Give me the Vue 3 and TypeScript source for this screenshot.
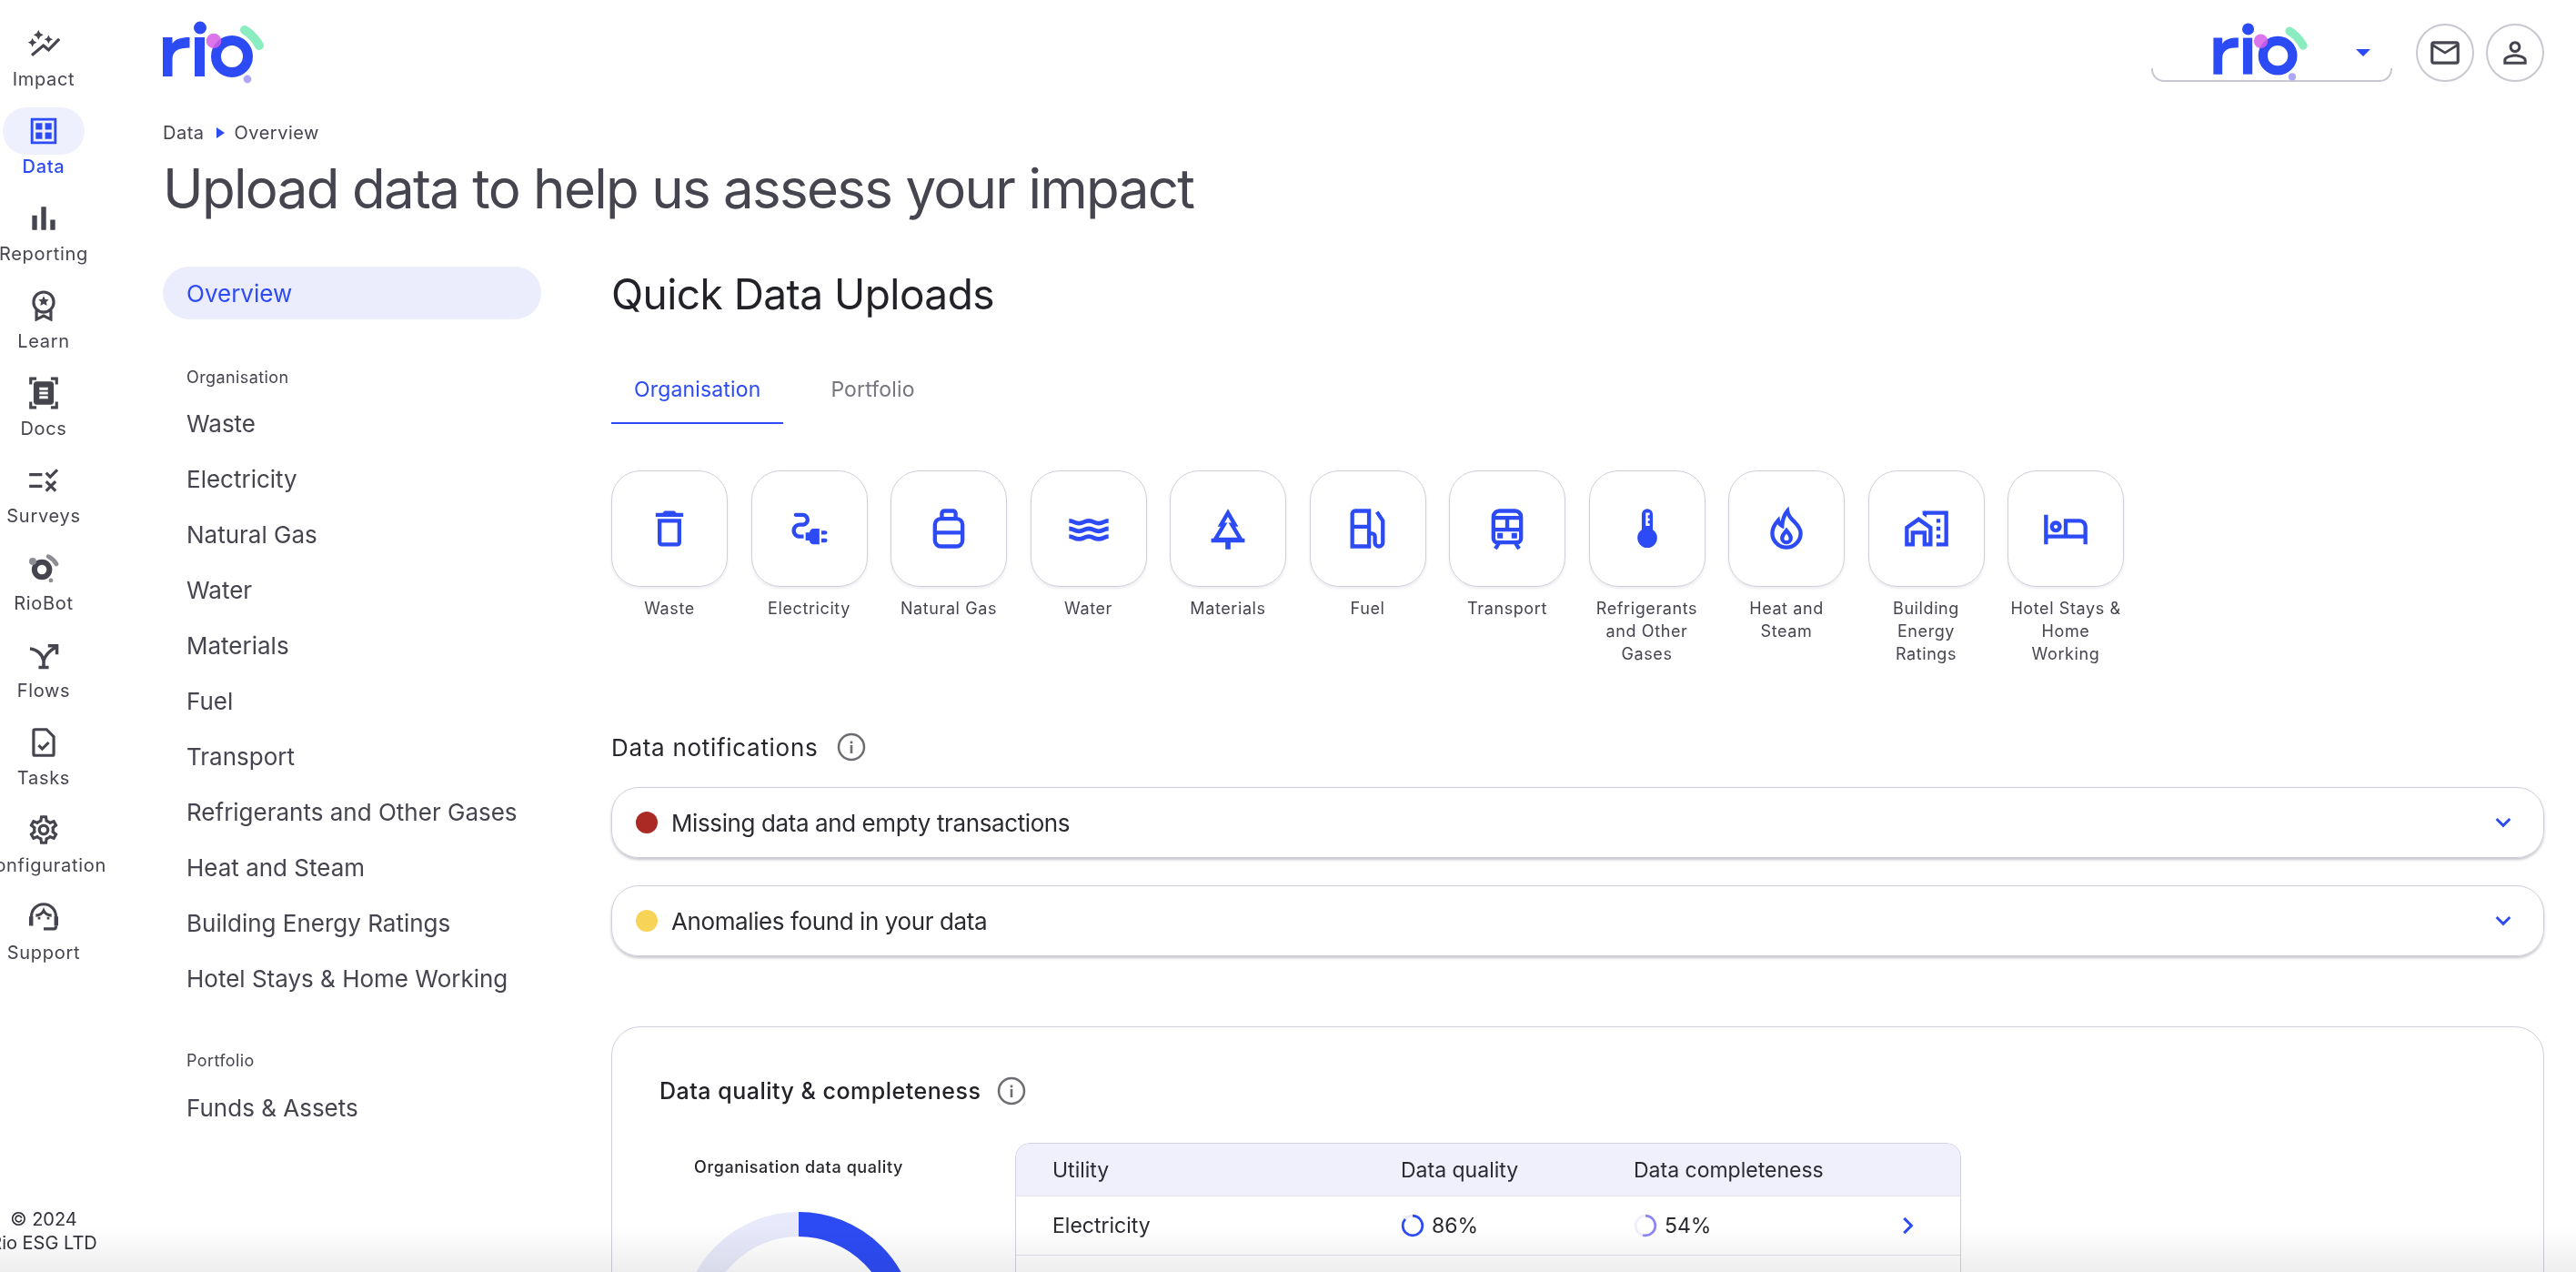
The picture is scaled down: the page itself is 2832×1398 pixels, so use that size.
<script setup lang="ts">
type Icon = { f?: string; s?: string; g?: string; sw?: number };

const star = (x: number, y: number, r = 3) => {
  const a = r * 0.34;
  const b = r * 0.66;
  return `M${x} ${y - r}l${a} ${b} ${b} ${a} ${-b} ${a} ${-a} ${b} ${-a} ${-b} ${-b} ${-a} ${b} ${-a}z`;
};

const railItems: { label: string; active?: boolean; icon: Icon }[] = [
  {
    label: "Impact",
    icon: {
      f: star(8.4, 5.9, 3.4) + star(4.2, 11.2, 3) + star(15.4, 9, 3),
      s: "M3.8 20l8-6.7 3.6 3 7.4-7.6",
      sw: 2,
    },
  },
  {
    label: "Data",
    active: true,
    icon: {
      f: "M3 3h18v18H3zM4.8 4.8v14.4h14.4V4.8zM6.5 6.5h4.5V11H6.5zM13 6.5h4.5V11H13zM6.5 13h4.5v4.5H6.5zM13 13h4.5v4.5H13z",
    },
  },
  {
    label: "Reporting",
    icon: { f: "M4 10h3.4v10H4zM10.3 4h3.4v16h-3.4zM16.6 13H20v7h-3.4z" },
  },
  {
    label: "Learn",
    icon: {
      f: "M12 5.2l1.1 2.3 2.5.3-1.8 1.7.5 2.5-2.3-1.2-2.3 1.2.5-2.5-1.8-1.7 2.5-.3z",
      s: "M12 2.5a7 7 0 1 1 0 14 7 7 0 0 1 0-14zM7 15v6.5l5-2.5 5 2.5V15",
      sw: 2,
    },
  },
  {
    label: "Docs",
    icon: {
      f: "M7 3H4v3H2V1h5zM22 6V1h-5v2h3v3zM7 21H4v-3H2v5h5zM20 18v3h-3v2h5v-5zM19 18c0 1.1-.9 2-2 2H7c-1.1 0-2-.9-2-2V6c0-1.1.9-2 2-2h10c1.1 0 2 .9 2 2zM15 8H9v2h6zM15 11H9v2h6zM15 14H9v2h6z",
    },
  },
  {
    label: "Surveys",
    icon: {
      f: "M16.54 11L13 7.46l1.41-1.41 2.12 2.12 4.24-4.24 1.41 1.41zM11 7H2v2h9zM21 13.41L19.59 12 17 14.59 14.41 12 13 13.41 15.59 16 13 18.59 14.41 20 17 17.41 19.59 20 21 18.59 18.41 16zM11 15H2v2h9z",
    },
  },
  {
    label: "RioBot",
    icon: {
      s: "M10.8 8.1a5.2 5.2 0 1 1 0 10.4 5.2 5.2 0 0 1 0-10.4z",
      sw: 3.8,
      g: "M15.2 4.2c2.4 1.2 4.4 3 5.7 5.3",
    },
  },
  {
    label: "Flows",
    icon: {
      s: "M2.5 7.5C7 8 11 11 12 16v4M8.5 20.5h7M12 16c1-4 4-7 8.5-9.5M15 5.5h6.2v6",
      sw: 2.2,
    },
  },
  {
    label: "Tasks",
    icon: {
      s: "M14 3H6a1 1 0 0 0-1 1v16a1 1 0 0 0 1 1h12a1 1 0 0 0 1-1V8zM8.5 14l2.5 2.5 4.5-4.5",
      sw: 2,
    },
  },
  {
    label: "Configuration",
    icon: {
      f: "M19.43 12.98c.04-.32.07-.64.07-.98 0-.34-.03-.66-.07-.98l2.11-1.65c.19-.15.24-.42.12-.64l-2-3.46c-.09-.16-.26-.25-.44-.25-.06 0-.12.01-.17.03l-2.49 1c-.52-.4-1.08-.73-1.69-.98l-.38-2.65C14.46 2.18 14.25 2 14 2h-4c-.25 0-.46.18-.49.42l-.38 2.65c-.61.25-1.17.59-1.69.98l-2.49-1c-.06-.02-.12-.03-.18-.03-.17 0-.34.09-.43.25l-2 3.46c-.13.22-.07.49.12.64l2.11 1.65c-.04.32-.07.65-.07.98 0 .33.03.66.07.98l-2.11 1.65c-.19.15-.24.42-.12.64l2 3.46c.09.16.26.25.44.25.06 0 .12-.01.17-.03l2.49-1c.52.4 1.08.73 1.69.98l.38 2.65c.03.24.24.42.49.42h4c.25 0 .46-.18.49-.42l.38-2.65c.61-.25 1.17-.59 1.69-.98l2.49 1c.06.02.12.03.18.03.17 0 .34-.09.43-.25l2-3.46c.12-.22.07-.49-.12-.64l-2.11-1.65zm-1.98-1.71c.04.31.05.52.05.73 0 .21-.02.43-.05.73l-.14 1.13.89.7 1.08.84-.7 1.21-1.27-.51-1.04-.42-.9.68c-.43.32-.84.56-1.25.73l-1.06.43-.16 1.13-.2 1.35h-1.4l-.19-1.35-.16-1.13-1.06-.43c-.43-.18-.83-.41-1.23-.71l-.91-.7-1.06.43-1.27.51-.7-1.21 1.08-.84.89-.7-.14-1.13c-.03-.31-.05-.54-.05-.74s.02-.43.05-.73l.14-1.13-.89-.7-1.08-.84.7-1.21 1.27.51 1.04.42.9-.68c.43-.32.84-.56 1.25-.73l1.06-.43.16-1.13.2-1.35h1.39l.19 1.35.16 1.13 1.06.43c.43.18.83.41 1.23.71l.91.7 1.06-.43 1.27-.51.7 1.21-1.07.85-.89.7.14 1.13zM12 8c-2.21 0-4 1.79-4 4s1.79 4 4 4 4-1.79 4-4-1.79-4-4-4zm0 6c-1.1 0-2-.9-2-2s.9-2 2-2 2 .9 2 2-.9 2-2 2z",
    },
  },
  {
    label: "Support",
    icon: {
      f: "M1.9 11.5h2.8V18H1.9zM19.3 11.5h2.8V18h-2.8zM8 11.8h1.7v1.7H8zM14.3 11.8H16v1.7h-1.7z",
      s: "M3.5 12v-.5a8.5 8.5 0 0 1 17 0v.5M6.5 10.8c3 0 4.5-1.3 5.5-3.3 1 2 2.5 3.3 5.5 3.3M20.5 18v.6a1.5 1.5 0 0 1-1.5 1.5h-7",
      sw: 2,
    },
  },
];

const tiles: { label: string; icon: Icon }[] = [
  {
    label: "Waste",
    icon: { f: "M6 19c0 1.1.9 2 2 2h8c1.1 0 2-.9 2-2V7H6zM8 9h8v10H8zM15.5 4l-1-1h-5l-1 1H5v2h14V4z" },
  },
  {
    label: "Electricity",
    icon: {
      f: "M21 14c0-.55-.45-1-1-1h-2v2h2c.55 0 1-.45 1-1zM20 17h-2v2h2c.55 0 1-.45 1-1s-.45-1-1-1zM12 14h-2v4h2c0 1.1.9 2 2 2h3v-8h-3c-1.1 0-2 .9-2 2zM5 13c0-1.1.9-2 2-2h1.5c1.93 0 3.5-1.57 3.5-3.5S10.43 4 8.5 4H5c-.55 0-1 .45-1 1s.45 1 1 1h3.5c.83 0 1.5.67 1.5 1.5S9.33 9 8.5 9H7c-2.21 0-4 1.79-4 4s1.79 4 4 4h2v-2H7c-1.1 0-2-.9-2-2z",
    },
  },
  {
    label: "Natural Gas",
    icon: {
      s: "M8.5 7V4.3A1.3 1.3 0 0 1 9.8 3h4.4a1.3 1.3 0 0 1 1.3 1.3V7M8 7h8a3 3 0 0 1 3 3v8a3 3 0 0 1-3 3H8a3 3 0 0 1-3-3v-8a3 3 0 0 1 3-3zM5 14h14",
      sw: 2,
    },
  },
  {
    label: "Water",
    icon: {
      s: "M2 8c2.5 0 2.5 1.3 5 1.3S9.5 8 12 8s2.5 1.3 5 1.3S19.5 8 22 8M2 12c2.5 0 2.5 1.3 5 1.3s2.5-1.3 5-1.3 2.5 1.3 5 1.3 2.5-1.3 5-1.3M2 16c2.5 0 2.5 1.3 5 1.3s2.5-1.3 5-1.3 2.5 1.3 5 1.3 2.5-1.3 5-1.3",
      sw: 2.2,
    },
  },
  {
    label: "Materials",
    icon: {
      f: "M10.7 18h2.6v4.5h-2.6z",
      s: "M12 4l3.5 6H14l4.5 7.5h-13L10 10H8.5zM3.5 18h17",
      sw: 2,
    },
  },
  {
    label: "Fuel",
    icon: {
      s: "M4 21V4.5A1.5 1.5 0 0 1 5.5 3h7v18zM4 11h8.5M12.5 14.5H14a1.5 1.5 0 0 1 1.5 1.5v3a2 2 0 0 0 4 0V8l-3-4.5",
      sw: 2,
    },
  },
  {
    label: "Transport",
    icon: {
      f: "M7 14.2h2.8V17H7zM14.2 14.2H17V17h-2.8z",
      s: "M5 6a3 3 0 0 1 3-3h8a3 3 0 0 1 3 3v11a2 2 0 0 1-2 2H7a2 2 0 0 1-2-2zM5 12.5h14M12 6.5v6M5 6.5h14M8 19l-2 3.2M16 19l2 3.2",
      sw: 2,
    },
  },
  {
    label: "Refrigerants and Other Gases",
    icon: {
      f: "M12 2a2.8 2.8 0 0 1 2.8 2.8v7.8a5 5 0 1 1-5.6 0V4.8A2.8 2.8 0 0 1 12 2zM11.2 3.9v6.7h2V9.4h-.9V8h.9V6.8h-.9V5.2h.9V3.9z",
    },
  },
  {
    label: "Heat and Steam",
    icon: {
      s: "M12.5 3c.5 3 2 4 3.5 5.5s3.2 3.5 3.2 5.8a7.2 7.2 0 0 1-14.4 0c0-2.8 1.6-5 3-6.5.3 1.5 1 2.3 2 2.8C10 7.5 10.8 5 12.5 3zM12 13c1 1.3 2.2 2.3 2.2 3.8a2.2 2.2 0 0 1-4.4 0c0-1.5 1.2-2.5 2.2-3.8z",
      sw: 2,
    },
  },
  {
    label: "Building Energy Ratings",
    icon: {
      f: "M1 11v10h5v-6h4v6h5V11L8 6zM13 19h-1v-6H4v6H3v-7l5-3.5 5 3.5zM17 7h2v2h-2zM17 11h2v2h-2zM17 15h2v2h-2zM10 3v1.97l2 1.43V5h9v14h-4v2h6V3z",
    },
  },
  {
    label: "Hotel Stays & Home Working",
    icon: {
      f: "M7 14c1.66 0 3-1.34 3-3S8.66 8 7 8s-3 1.34-3 3 1.34 3 3 3zM7 10c.55 0 1 .45 1 1s-.45 1-1 1-1-.45-1-1 .45-1 1-1zM19 7h-8v8H3V5H1v15h2v-3h18v3h2v-9c0-2.21-1.79-4-4-4zM21 15h-8V9h6c1.1 0 2 .9 2 2z",
    },
  },
];

const orgLinks = [
  "Waste",
  "Electricity",
  "Natural Gas",
  "Water",
  "Materials",
  "Fuel",
  "Transport",
  "Refrigerants and Other Gases",
  "Heat and Steam",
  "Building Energy Ratings",
  "Hotel Stays & Home Working",
];

const notifications = [
  { label: "Missing data and empty transactions", color: "#ab2a24" },
  { label: "Anomalies found in your data", color: "#f7d358" },
];

const ringLength = 2 * Math.PI * 10;
const ringDash = (pct: number) => `${(ringLength * pct) / 100} ${ringLength}`;

const donutLength = 2 * Math.PI * 115.5;
const donutDash = `${donutLength * 0.72} ${donutLength}`;
</script>

<template>
  <div class="page">
    <svg class="defs" width="0" height="0">
      <symbol id="rio-logo" viewBox="0 0 112 72">
        <path
          fill="#2d4bf5"
          d="M0 20h10.5v7c3-5 9-7 19-7v11.5c-12 0-19 3-19 13V63H0z"
        />
        <rect x="35" y="20" width="11" height="43" fill="#2d4bf5" />
        <circle cx="41" cy="9.6" r="7" fill="#2d4bf5" />
        <circle cx="76" cy="41" r="17.5" fill="none" stroke="#2d4bf5" stroke-width="11" />
        <circle cx="56" cy="24" r="8.3" fill="#d65ee6" opacity="0.85" />
        <path
          d="M90 12c7 4 12 10 16 17"
          fill="none"
          stroke="#8aedc0"
          stroke-width="10"
          stroke-linecap="round"
        />
        <circle cx="93" cy="66" r="4.4" fill="#aea6f7" />
      </symbol>
    </svg>

    <nav class="rail">
      <a
        v-for="item in railItems"
        :key="item.label"
        class="rail-item"
        :class="{ active: item.active }"
      >
        <span class="rail-icon">
          <svg viewBox="0 0 24 24" width="38" height="38">
            <path v-if="item.icon.f" :d="item.icon.f" fill="currentColor" fill-rule="evenodd" />
            <path
              v-if="item.icon.s"
              :d="item.icon.s"
              fill="none"
              stroke="currentColor"
              :stroke-width="item.icon.sw || 2"
            />
            <g v-if="item.icon.g" fill="#8d8d93">
              <path :d="item.icon.g" fill="none" stroke="#8d8d93" stroke-width="3" stroke-linecap="round" />
              <circle cx="4.4" cy="7.6" r="2.5" />
              <circle cx="17" cy="20.8" r="1.5" />
            </g>
          </svg>
        </span>
        <span class="rail-label">{{ item.label }}</span>
      </a>
      <div class="rail-footer">
        <div>© 2024</div>
        <div>Rio ESG LTD</div>
      </div>
    </nav>

    <div class="main">
      <header class="topbar">
        <svg class="logo" width="112" height="72"><use href="#rio-logo" /></svg>
        <div class="top-actions">
          <div class="org-select">
            <svg class="org-logo" width="105" height="67"><use href="#rio-logo" /></svg>
            <span class="caret"></span>
          </div>
          <button class="round-btn">
            <svg viewBox="0 0 24 24" width="38" height="38">
              <path
                fill="currentColor"
                fill-rule="evenodd"
                d="M20 4H4c-1.1 0-1.99.9-1.99 2L2 18c0 1.1.9 2 2 2h16c1.1 0 2-.9 2-2V6c0-1.1-.9-2-2-2zM20 18H4V8l8 5 8-5zM12 11L4 6h16z"
              />
            </svg>
          </button>
          <button class="round-btn">
            <svg viewBox="0 0 24 24" width="38" height="38">
              <path
                fill="currentColor"
                fill-rule="evenodd"
                d="M12 5.9c1.16 0 2.1.94 2.1 2.1s-.94 2.1-2.1 2.1S9.9 9.16 9.9 8s.94-2.1 2.1-2.1M12 14.9c2.97 0 6.1 1.46 6.1 2.1v1.1H5.9V17c0-.64 3.13-2.1 6.1-2.1M12 4C9.79 4 8 5.79 8 8s1.79 4 4 4 4-1.79 4-4-1.79-4-4-4zM12 13c-2.67 0-8 1.34-8 4v3h16v-3c0-2.66-5.33-4-8-4z"
              />
            </svg>
          </button>
        </div>
      </header>

      <div class="crumbs">
        <span>Data</span>
        <span class="crumb-arrow"></span>
        <span>Overview</span>
      </div>
      <h1 class="title">Upload data to help us assess your impact</h1>

      <div class="columns">
        <aside class="side">
          <a class="side-pill">Overview</a>
          <div class="side-group">Organisation</div>
          <a v-for="link in orgLinks" :key="link" class="side-link">{{ link }}</a>
          <div class="side-group second">Portfolio</div>
          <a class="side-link">Funds &amp; Assets</a>
        </aside>

        <section class="content">
          <h2 class="section-title">Quick Data Uploads</h2>

          <div class="tabs">
            <a class="tab active">Organisation</a>
            <a class="tab">Portfolio</a>
          </div>

          <div class="tiles">
            <div v-for="tile in tiles" :key="tile.label" class="tile">
              <div class="tile-box">
                <svg viewBox="0 0 24 24" width="52" height="52">
                  <path v-if="tile.icon.f" :d="tile.icon.f" fill="currentColor" fill-rule="evenodd" />
                  <path
                    v-if="tile.icon.s"
                    :d="tile.icon.s"
                    fill="none"
                    stroke="currentColor"
                    :stroke-width="tile.icon.sw || 2"
                  />
                </svg>
              </div>
              <div class="tile-label">{{ tile.label }}</div>
            </div>
          </div>

          <div class="subhead">
            <span>Data notifications</span>
            <svg class="info" viewBox="0 0 32 32" width="32" height="32">
              <circle cx="16" cy="16" r="14" fill="none" stroke="currentColor" stroke-width="2.5" />
              <rect x="14.7" y="14" width="2.6" height="9" fill="currentColor" />
              <rect x="14.7" y="9.5" width="2.6" height="2.8" fill="currentColor" />
            </svg>
          </div>

          <div class="notices">
            <div v-for="n in notifications" :key="n.label" class="notice">
              <span class="dot" :style="{ background: n.color }"></span>
              <span class="notice-text">{{ n.label }}</span>
              <svg class="chev" viewBox="0 0 24 24" width="32" height="32">
                <path d="M6.5 9l5.5 5.5L17.5 9" fill="none" stroke="currentColor" stroke-width="2.2" />
              </svg>
            </div>
          </div>

          <div class="card">
            <div class="card-head">
              <span>Data quality &amp; completeness</span>
              <svg class="info" viewBox="0 0 32 32" width="32" height="32">
                <circle cx="16" cy="16" r="14" fill="none" stroke="currentColor" stroke-width="2.5" />
                <rect x="14.7" y="14" width="2.6" height="9" fill="currentColor" />
                <rect x="14.7" y="9.5" width="2.6" height="2.8" fill="currentColor" />
              </svg>
            </div>
            <div class="card-body">
              <div class="chart">
                <div class="chart-title">Organisation data quality</div>
                <svg class="donut" viewBox="0 0 258 258" width="258" height="258">
                  <circle cx="129" cy="129" r="115.5" fill="none" stroke="#e8eafb" stroke-width="27" />
                  <circle
                    cx="129"
                    cy="129"
                    r="115.5"
                    fill="none"
                    stroke="#2d4bf5"
                    stroke-width="27"
                    :stroke-dasharray="donutDash"
                    transform="rotate(-90 129 129)"
                  />
                </svg>
              </div>
              <div class="table">
                <div class="row head">
                  <span>Utility</span>
                  <span>Data quality</span>
                  <span>Data completeness</span>
                  <span></span>
                </div>
                <div class="row">
                  <span>Electricity</span>
                  <span class="metric">
                    <svg viewBox="0 0 24 24" width="26" height="26">
                      <circle cx="12" cy="12" r="10" fill="none" stroke="#e8eafb" stroke-width="2.5" />
                      <circle
                        cx="12"
                        cy="12"
                        r="10"
                        fill="none"
                        stroke="#2d4bf5"
                        stroke-width="2.5"
                        :stroke-dasharray="ringDash(86)"
                        transform="rotate(-90 12 12)"
                      />
                    </svg>
                    86%
                  </span>
                  <span class="metric">
                    <svg viewBox="0 0 24 24" width="26" height="26">
                      <circle cx="12" cy="12" r="10" fill="none" stroke="#eeeefc" stroke-width="2.5" />
                      <circle
                        cx="12"
                        cy="12"
                        r="10"
                        fill="none"
                        stroke="#8d86f5"
                        stroke-width="2.5"
                        :stroke-dasharray="ringDash(54)"
                        transform="rotate(-90 12 12)"
                      />
                    </svg>
                    54%
                  </span>
                  <svg class="row-chev" viewBox="0 0 24 24" width="30" height="30">
                    <path d="M9 5.5l6.5 6.5L9 18.5" fill="none" stroke="currentColor" stroke-width="2.4" />
                  </svg>
                </div>
                <div class="row"></div>
              </div>
            </div>
          </div>
        </section>
      </div>
    </div>

    <div class="bottom-fade"></div>
  </div>
</template>

<style>
html,
body {
  margin: 0;
  background: #fff;
}
</style>

<style scoped>
.page {
  position: relative;
  display: flex;
  width: 2832px;
  height: 1398px;
  overflow: hidden;
  background: #fff;
  color: #45454f;
  font-family: Inter, "Noto Sans", sans-serif;
}

.defs {
  position: absolute;
}

.rail {
  display: flex;
  flex-direction: column;
  flex: 0 0 96px;
  width: 96px;
  height: 1373px;
  padding-top: 22px;
  box-sizing: border-box;
}

.rail-item {
  display: flex;
  flex-direction: column;
  align-items: center;
  height: 96px;
  flex: 0 0 96px;
  white-space: nowrap;
}

.rail-icon {
  display: flex;
  align-items: center;
  justify-content: center;
  width: 90px;
  height: 52px;
  flex: 0 0 52px;
  border-radius: 26px;
}

.rail-label {
  font-size: 20px;
  line-height: 24px;
  margin-top: 1px;
  letter-spacing: 0.7px;
}

.rail-item.active {
  color: #2d4bf5;
}

.rail-item.active .rail-icon {
  background: #eff0fd;
}

.rail-item.active .rail-label {
  font-weight: 500;
}

.rail-footer {
  margin-top: auto;
  height: 47px;
  flex: 0 0 47px;
  padding-top: 1px;
  box-sizing: border-box;
  clip-path: inset(0 -40px 0 -40px);
  display: flex;
  flex-direction: column;
  align-items: center;
  white-space: nowrap;
  font-size: 20px;
  line-height: 26px;
  color: #33333b;
}

.main {
  flex: 1;
  min-width: 0;
  padding: 0 35px 0 83px;
}

.topbar {
  display: flex;
  justify-content: space-between;
  align-items: flex-start;
  height: 93px;
  padding-top: 21px;
  box-sizing: border-box;
}

.logo {
  display: block;
}

.top-actions {
  display: flex;
  align-items: flex-start;
  gap: 13px;
  padding-top: 5px;
}

.org-select {
  position: relative;
  width: 265px;
  height: 64px;
  margin-right: 13px;
  box-sizing: border-box;
}

.org-select::after {
  content: "";
  position: absolute;
  left: 0;
  right: 0;
  bottom: 0;
  height: 15px;
  border: 2px solid #c8c8d4;
  border-top: none;
  border-radius: 0 0 14px 14px;
  box-sizing: border-box;
}

.org-logo {
  position: absolute;
  left: 68px;
  top: -3px;
  z-index: 1;
}

.caret {
  position: absolute;
  left: 225px;
  top: 28px;
  width: 0;
  height: 0;
  border-left: 8px solid transparent;
  border-right: 8px solid transparent;
  border-top: 8px solid #2d4bf5;
}

.round-btn {
  display: flex;
  align-items: center;
  justify-content: center;
  width: 64px;
  height: 64px;
  padding: 0;
  border: 2.5px solid #c8c8d0;
  border-radius: 50%;
  background: #fff;
  color: #45454f;
}

.crumbs {
  display: flex;
  align-items: center;
  margin-top: 41px;
  height: 24px;
  font-size: 20px;
  letter-spacing: 0.5px;
}

.crumb-arrow {
  width: 0;
  height: 0;
  margin: 0 11px 0 13px;
  border-top: 6px solid transparent;
  border-bottom: 6px solid transparent;
  border-left: 9px solid #2d4bf5;
}

.title {
  margin: 9px 0 0;
  height: 80px;
  font-size: 60px;
  line-height: 80px;
  font-weight: 400;
  letter-spacing: -1.7px;
  white-space: nowrap;
}

.columns {
  display: flex;
  margin-top: 46px;
  gap: 77px;
}

.side {
  flex: 0 0 416px;
  display: flex;
  flex-direction: column;
}

.side-pill {
  height: 58px;
  line-height: 59px;
  padding-left: 26px;
  border-radius: 29px;
  background: #ebedfc;
  color: #2d4bf5;
  font-size: 26px;
}

.side-group {
  margin-top: 52px;
  margin-bottom: 7.5px;
  padding-left: 26px;
  height: 24px;
  line-height: 24px;
  font-size: 18px;
  letter-spacing: 0.4px;
}

.side-group.second {
  margin-top: 48px;
  margin-bottom: 9px;
}

.side-link {
  height: 61px;
  line-height: 61px;
  padding-left: 26px;
  font-size: 26px;
  white-space: nowrap;
}

.content {
  flex: 1;
  min-width: 0;
}

.section-title {
  margin: 0;
  height: 60px;
  line-height: 60px;
  font-size: 46px;
  font-weight: 400;
  letter-spacing: -0.55px;
  color: #222228;
}

.tabs {
  display: flex;
  gap: 27px;
  margin-top: 39px;
  height: 74px;
}

.tab {
  height: 74px;
  line-height: 72px;
  padding: 0 25px;
  box-sizing: border-box;
  font-size: 23px;
  letter-spacing: 0.15px;
  color: #77777f;
}

.tab.active {
  color: #2d4bf5;
  border-bottom: 2px solid #2d4bf5;
}

.tiles {
  display: flex;
  gap: 25.5px;
  margin-top: 51px;
  height: 214px;
}

.tile {
  width: 128px;
}

.tile-box {
  display: flex;
  align-items: center;
  justify-content: center;
  width: 128px;
  height: 128px;
  box-sizing: border-box;
  border: 1px solid #cfcfdc;
  border-radius: 32px;
  box-shadow: 0 2px 3px rgba(60, 60, 90, 0.1);
  color: #2d4bf5;
}

.tile-label {
  margin-top: 11px;
  font-size: 18px;
  line-height: 25px;
  letter-spacing: 0.6px;
  text-align: center;
}

.subhead {
  display: flex;
  align-items: center;
  gap: 21px;
  margin-top: 74px;
  height: 32px;
  font-size: 26px;
  letter-spacing: 0.7px;
  color: #26262c;
}

.info {
  color: #6e6e72;
}

.notices {
  display: flex;
  flex-direction: column;
  gap: 30px;
  margin-top: 28px;
}

.notice {
  display: flex;
  align-items: center;
  height: 78px;
  padding: 0 28px 0 26px;
  box-sizing: border-box;
  border: 1px solid #cfcfdc;
  border-radius: 30px;
  box-shadow: 0 2px 3px rgba(60, 60, 80, 0.3);
  font-size: 26px;
  letter-spacing: -0.4px;
  color: #2a2a30;
}

.dot {
  width: 24px;
  height: 24px;
  border-radius: 50%;
  margin-right: 15px;
}

.notice-text {
  flex: 1;
  padding-top: 1px;
}

.chev {
  color: #2d4bf5;
}

.card {
  margin-top: 77px;
  height: 600px;
  box-sizing: border-box;
  padding: 54px 52px 0;
  border: 1px solid #cfcfdc;
  border-radius: 32px;
}

.card-head {
  display: flex;
  align-items: center;
  gap: 18px;
  height: 32px;
  font-size: 25px;
  font-weight: 500;
  letter-spacing: 0.5px;
  color: #222228;
}

.card-body {
  display: flex;
  margin-top: 41px;
}

.chart {
  flex: 0 0 306px;
  margin-right: 85px;
  display: flex;
  flex-direction: column;
  align-items: center;
}

.chart-title {
  margin-top: 15px;
  line-height: 24px;
  font-size: 18px;
  font-weight: 500;
  letter-spacing: 0.6px;
  color: #26262c;
}

.donut {
  margin-top: 37px;
  flex: none;
}

.table {
  width: 1040px;
  box-sizing: border-box;
  border: 1px solid #d0d0e0;
  border-radius: 16px;
  overflow: hidden;
}

.row {
  display: grid;
  grid-template-columns: 383px 256px 1fr 73px;
  align-items: center;
  height: 65px;
  padding-left: 40px;
  border-bottom: 1px solid #e2e2ea;
  font-size: 23px;
  color: #2a2a30;
  box-sizing: border-box;
}

.row.head {
  height: 58px;
  background: #f0f0fd;
}

.metric {
  display: flex;
  align-items: center;
  gap: 8px;
}

.row-chev {
  color: #2d4bf5;
}

.bottom-fade {
  position: absolute;
  left: 0;
  right: 0;
  bottom: 0;
  height: 50px;
  background: linear-gradient(to bottom, #fff, #eee);
  mix-blend-mode: multiply;
  pointer-events: none;
}
</style>
